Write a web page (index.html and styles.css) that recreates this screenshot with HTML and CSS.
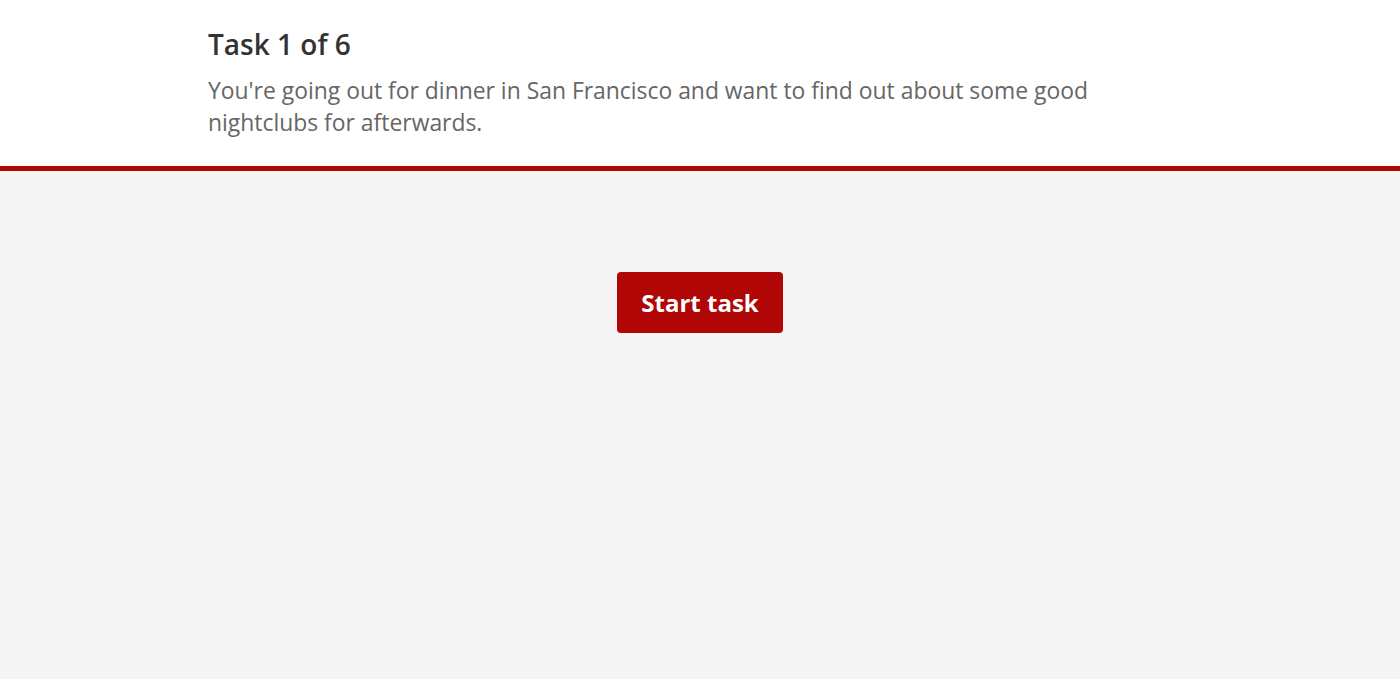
FILE: index.html
```html
<!DOCTYPE html>
<html>
<head>
<meta charset="utf-8">
<link rel="stylesheet" href="styles.css">
</head>
<body>
<header class="task-header">
  <div class="container">
    <h1 class="task-title">Task 1 of 6</h1>
    <p class="task-desc">You're going out for dinner in San Francisco and want to find out about some good nightclubs for afterwards.</p>
  </div>
</header>
<main class="task-body">
  <button class="start-btn">Start task</button>
</main>
</body>
</html>
```
FILE: styles.css
```css
html, body {
  margin: 0;
  padding: 0;
  height: 100%;
}
body {
  font-family: "Open Sans", "Liberation Sans", sans-serif;
  background: #f5f5f5;
}
.task-header {
  background: #fff;
  border-bottom: 5px solid #b00606;
}
.container {
  width: 984px;
  margin: 0 auto;
  padding: 25px 0 27px;
}
.task-title {
  margin: 0;
  font-size: 28px;
  font-weight: 600;
  color: #333;
  line-height: 38px;
}
.task-desc {
  margin: 12px 0 0;
  font-size: 22.9px;
  line-height: 32px;
  color: #666;
}
.task-body {
  display: flex;
  justify-content: center;
  padding-top: 101px;
}
.start-btn {
  width: 166px;
  height: 61px;
  background: #b00606;
  color: #fff;
  border: none;
  border-radius: 4px;
  font-family: "Open Sans", "Liberation Sans", sans-serif;
  font-size: 24px;
  font-weight: 700;
  padding: 0;
}
```
